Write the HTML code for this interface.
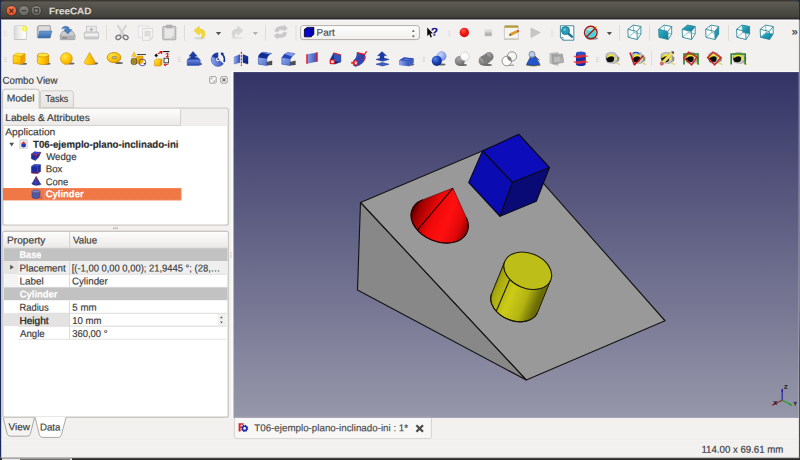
<!DOCTYPE html>
<html><head><meta charset="utf-8"><title>FreeCAD</title>
<style>

html,body{margin:0;padding:0;}
body{width:800px;height:460px;overflow:hidden;background:#f2f1f0;font-family:"Liberation Sans",sans-serif;}
#win{position:absolute;left:0;top:0;width:800px;height:460px;overflow:hidden;}
.a{position:absolute;}
.t{position:absolute;left:0;top:0;white-space:nowrap;transform-origin:0 0;-webkit-text-stroke:0.18px currentColor;}

</style></head>
<body>
<div id="win">

<svg class="a" style="left:0;top:0" width="800" height="460" viewBox="0 0 800 460">
<g id="chrome">
<defs>
<linearGradient id="gtitle" x1="0" y1="0" x2="0" y2="1"><stop offset="0" stop-color="#393834"/><stop offset="0.05" stop-color="#3b3a36"/><stop offset="0.1" stop-color="#5c5a53"/><stop offset="0.17" stop-color="#5a5851"/><stop offset="0.86" stop-color="#43423c"/><stop offset="0.92" stop-color="#302f2c"/><stop offset="1" stop-color="#2c2b28"/></linearGradient>
<linearGradient id="gvp" x1="0" y1="0" x2="0" y2="1"><stop offset="0" stop-color="#333366"/><stop offset="1" stop-color="#9797aa"/></linearGradient>
<linearGradient id="gclose" x1="0" y1="0" x2="0" y2="1"><stop offset="0" stop-color="#f27a50"/><stop offset="1" stop-color="#e3481f"/></linearGradient>
<linearGradient id="gbtn" x1="0" y1="0" x2="0" y2="1"><stop offset="0" stop-color="#86857e"/><stop offset="1" stop-color="#66655f"/></linearGradient>
<linearGradient id="ghdr" x1="0" y1="0" x2="0" y2="1"><stop offset="0" stop-color="#fdfdfc"/><stop offset="1" stop-color="#ebe9e7"/></linearGradient>
<linearGradient id="gtab" x1="0" y1="0" x2="0" y2="1"><stop offset="0" stop-color="#f8f8f7"/><stop offset="1" stop-color="#f2f1f0"/></linearGradient>
<linearGradient id="gtab2" x1="0" y1="0" x2="0" y2="1"><stop offset="0" stop-color="#f0eeec"/><stop offset="1" stop-color="#e8e6e3"/></linearGradient>
</defs>
<rect x="0" y="0" width="800" height="460" fill="#f2f1f0"/>
<rect x="0" y="0" width="800" height="20" fill="#20284c"/>
<path d="M0.9,19.6 L0.9,3.6 Q0.9,0 4.4,0 L795.6,0 Q799,0 799,3.6 L799,19.6 Z" fill="url(#gtitle)"/>
<rect x="1" y="19.5" width="798" height="1.4" fill="#fbfbfa"/>
<circle cx="11.4" cy="10.7" r="5.4" fill="#33322e"/>
<circle cx="11.4" cy="10.7" r="4.8" fill="url(#gclose)"/>
<path d="M9.5,8.8 L13.3,12.6 M13.3,8.8 L9.5,12.6" stroke="#5a2410" stroke-width="1.1"/>
<circle cx="23.9" cy="10.7" r="5.4" fill="#33322e"/>
<circle cx="23.9" cy="10.7" r="4.8" fill="url(#gbtn)"/>
<circle cx="36.3" cy="10.7" r="5.4" fill="#33322e"/>
<circle cx="36.3" cy="10.7" r="4.8" fill="url(#gbtn)"/>
<rect x="21.6" y="10.1" width="4.6" height="1.2" fill="#3e3d39"/>
<rect x="34.2" y="8.6" width="4.2" height="4.2" fill="none" stroke="#3e3d39" stroke-width="1"/>
<rect x="0" y="20" width="1.1" height="440" fill="#1a2a5c"/>
<rect x="1" y="21" width="0.5" height="436.5" fill="#a09e9a" opacity="0.5"/>
<linearGradient id="gredge" x1="0" y1="0" x2="0" y2="1"><stop offset="0" stop-color="#8a8a8c"/><stop offset="0.65" stop-color="#808088"/><stop offset="0.78" stop-color="#54543e"/><stop offset="1" stop-color="#4c4c3a"/></linearGradient>
<rect x="798.9" y="20" width="1.1" height="440" fill="url(#gredge)"/>
<rect x="233.3" y="72" width="565.5" height="345.3" fill="url(#gvp)"/>
<rect x="231.2" y="71.2" width="2.1" height="346.1" fill="#fafaf9"/>
<rect x="231.2" y="71.2" width="567.6" height="0.9" fill="#f9f9f8"/>
</g>
<g id="scene">
<defs>
<linearGradient id="gcone" gradientUnits="userSpaceOnUse" x1="412" y1="209" x2="467" y2="232">
<stop offset="0" stop-color="#4a0000"/><stop offset="0.1" stop-color="#980000"/><stop offset="0.38" stop-color="#f00808"/><stop offset="0.62" stop-color="#ff1010"/><stop offset="0.85" stop-color="#e00808"/><stop offset="1" stop-color="#8a0000"/>
</linearGradient>
<linearGradient id="gcyl" gradientUnits="userSpaceOnUse" x1="491" y1="284" x2="537.5" y2="303">
<stop offset="0" stop-color="#6e6e08"/><stop offset="0.15" stop-color="#a8a810"/><stop offset="0.45" stop-color="#cccc18"/><stop offset="0.75" stop-color="#b4b412"/><stop offset="1" stop-color="#6a6a06"/>
</linearGradient>
</defs>
<polygon points="360.5,202.5 506,141 665,320.75 526.25,380" fill="#999999" stroke="#151515" stroke-width="1.15" stroke-linejoin="round"/>
<polygon points="360.5,202.5 526.25,380 357.5,290" fill="#888888" stroke="#151515" stroke-width="1.15" stroke-linejoin="round"/>
<polygon points="482.50,151.00 518.75,134.25 549.50,167.50 512.50,182.50" fill="#0c0cba" stroke="#0a0a20" stroke-width="1.15" stroke-linejoin="round"/>
<polygon points="482.50,151.00 512.50,182.50 500.00,216.25 468.75,182.50" fill="#0b0bb2" stroke="#0a0a20" stroke-width="1.15" stroke-linejoin="round"/>
<polygon points="512.50,182.50 549.50,167.50 536.25,201.25 500.00,216.25" fill="#0a0a76" stroke="#0a0a20" stroke-width="1.15" stroke-linejoin="round"/>
<path d="M452.90,188.10 L422.32,199.96 A29.75,21.0 22.2 1 0 466.47,217.97 Z" fill="url(#gcone)" stroke="#5a0000" stroke-width="0.6" stroke-linejoin="round"/>
<path d="M422.32,199.96 A29.75,21.0 22.2 1 0 466.47,217.97" fill="none" stroke="#200000" stroke-width="1.15" stroke-linecap="round"/>
<line x1="452.9" y1="188.1" x2="417.8" y2="229.7" stroke="#200000" stroke-width="1.1"/>
<path d="M504.79,261.38 L491.54,293.88 A24.8,17.5 22.2 0 0 537.46,312.62 L550.71,280.12 A24.8,17.5 22.2 0 1 504.79,261.38 Z" fill="url(#gcyl)" stroke="#1a1a00" stroke-width="1.0" stroke-linejoin="round"/>
<path d="M491.54,293.88 A24.8,17.5 22.2 0 0 537.46,312.62" fill="none" stroke="#1a1a00" stroke-width="1.15" stroke-linecap="round"/>
<ellipse cx="527.75" cy="270.75" rx="24.8" ry="17.5" transform="rotate(22.2 527.75 270.75)" fill="#bebe18" stroke="#1a1a00" stroke-width="1.1"/>
<line x1="509.5" y1="280" x2="496.25" y2="311.25" stroke="#1a1a00" stroke-width="1.1"/>
</g>
<g id="toolbar-icons">
<defs>
<linearGradient id="gy" x1="0" y1="0" x2="1" y2="1"><stop offset="0" stop-color="#ffe83c"/><stop offset="0.5" stop-color="#ffc800"/><stop offset="1" stop-color="#f09a00"/></linearGradient>
<linearGradient id="gyv" x1="0" y1="0" x2="0" y2="1"><stop offset="0" stop-color="#ffe030"/><stop offset="1" stop-color="#f4a400"/></linearGradient>
<radialGradient id="gys" cx="0.35" cy="0.3" r="0.8"><stop offset="0" stop-color="#ffe648"/><stop offset="0.6" stop-color="#ffc400"/><stop offset="1" stop-color="#e89800"/></radialGradient>
<linearGradient id="gb" x1="0" y1="0" x2="0" y2="1"><stop offset="0" stop-color="#88a4ec"/><stop offset="1" stop-color="#2848b0"/></linearGradient>
<linearGradient id="gbd" x1="0" y1="0" x2="0" y2="1"><stop offset="0" stop-color="#1c3ca8"/><stop offset="1" stop-color="#0c2478"/></linearGradient>
<linearGradient id="gbh" x1="0" y1="0" x2="1" y2="0"><stop offset="0" stop-color="#8ea6ee"/><stop offset="1" stop-color="#3050b8"/></linearGradient>
<radialGradient id="gbs" cx="0.35" cy="0.3" r="0.8"><stop offset="0" stop-color="#5c84e8"/><stop offset="0.5" stop-color="#1c44b8"/><stop offset="1" stop-color="#0a2070"/></radialGradient>
<radialGradient id="gbl" cx="0.35" cy="0.3" r="0.8"><stop offset="0" stop-color="#c8d8ff"/><stop offset="0.6" stop-color="#90a8ec"/><stop offset="1" stop-color="#6880d0"/></radialGradient>
<radialGradient id="ggs" cx="0.4" cy="0.3" r="0.8"><stop offset="0" stop-color="#a8a8a8"/><stop offset="0.6" stop-color="#808080"/><stop offset="1" stop-color="#585858"/></radialGradient>
<radialGradient id="gws" cx="0.4" cy="0.35" r="0.8"><stop offset="0" stop-color="#ffffff"/><stop offset="0.7" stop-color="#f8f8f8"/><stop offset="1" stop-color="#d8d8d8"/></radialGradient>
<radialGradient id="gred" cx="0.4" cy="0.3" r="0.8"><stop offset="0" stop-color="#ff5a4a"/><stop offset="0.5" stop-color="#ee1414"/><stop offset="1" stop-color="#c80808"/></radialGradient>
<linearGradient id="gt" x1="0" y1="0" x2="1" y2="1"><stop offset="0" stop-color="#34b4d0"/><stop offset="1" stop-color="#0c7890"/></linearGradient>
<linearGradient id="ggr" x1="0" y1="0" x2="0" y2="1"><stop offset="0" stop-color="#e4e4e4"/><stop offset="1" stop-color="#a8a8a8"/></linearGradient>
<linearGradient id="gfold" x1="0" y1="0" x2="0" y2="1"><stop offset="0" stop-color="#6c9cd8"/><stop offset="1" stop-color="#3868a8"/></linearGradient>
<radialGradient id="gstar" cx="0.5" cy="0.5" r="0.5"><stop offset="0" stop-color="#ffffc0"/><stop offset="0.45" stop-color="#f8f020"/><stop offset="1" stop-color="#f8f020" stop-opacity="0"/></radialGradient>
<linearGradient id="gshadow" x1="0" y1="0" x2="1" y2="0"><stop offset="0" stop-color="#404040"/><stop offset="1" stop-color="#404040" stop-opacity="0"/></linearGradient>
</defs>
<rect x="3.9000000000000004" y="30" width="2.6" height="6.600000000000001" fill="#e3e1de" opacity="0.8"/>
<line x1="5.2" y1="30" x2="5.2" y2="36.6" stroke="#f2f1f0" stroke-width="0.7"/>
<rect x="4" y="57" width="2.6" height="0.8" fill="#d2cfcb"/>
<rect x="4" y="59" width="2.6" height="0.8" fill="#d2cfcb"/>
<rect x="4" y="61" width="2.6" height="0.8" fill="#d2cfcb"/>
<rect x="14.3" y="25.8" width="12" height="13.4" rx="0.8" fill="#fafafa" stroke="#c2c2c2" stroke-width="0.8"/>
<rect x="14" y="39" width="12.6" height="1" fill="#bdbdbd" opacity="0.7"/>
<linearGradient id="gpage" x1="0" y1="0" x2="1" y2="0"><stop offset="0" stop-color="#dcdcdc"/><stop offset="0.6" stop-color="#f6f6f6"/><stop offset="1" stop-color="#ffffff"/></linearGradient><rect x="14.8" y="26.3" width="11" height="12.4" fill="url(#gpage)"/>
<circle cx="24.5" cy="28.6" r="3.6" fill="url(#gstar)"/>
<path d="M37.3,37.6 L37.3,27.2 L38.6,25.6 L50,25.6 L50.6,26.6 L50.6,37.6 Z" fill="#bdbdbd" stroke="#8a8a8a" stroke-width="0.6"/>
<rect x="39" y="26.4" width="10.6" height="5" fill="#dcdcdc"/>
<path d="M38,38 L39.8,31 L52,31 L49.8,38 Z" fill="url(#gfold)" stroke="#3c68a4" stroke-width="0.5"/>
<path d="M60.2,35 L62.6,31.2 L72.6,31.2 L75,35 L75,39 Q75,39.6 74.4,39.6 L60.8,39.6 Q60.2,39.6 60.2,39 Z" fill="#cfcfcf" stroke="#8c8c8c" stroke-width="0.7"/>
<rect x="60.6" y="35.4" width="14" height="3.8" fill="#b4b4b4"/>
<rect x="62" y="37.4" width="5" height="0.9" fill="#707070"/>
<path d="M61.6,28.6 Q64.5,24.6 69,27.6 L69.2,29.6 L71.8,29.6 L67.8,34 L63.8,29.8 L66.2,29.8 Q65,27.2 61.6,28.6 Z" fill="#4a80c4" stroke="#2c5c9c" stroke-width="0.5"/>
<rect x="86.6" y="26.2" width="9.6" height="6.4" fill="#ececec" stroke="#bcbcbc" stroke-width="0.7"/>
<path d="M91.4,27.6 L93.4,30 L92,30 L92,31.4 L90.8,31.4 L90.8,30 L89.4,30 Z" fill="#b0b0b0"/>
<rect x="84.2" y="32" width="14.4" height="7" rx="1.2" fill="#dcdcdc" stroke="#b4b4b4" stroke-width="0.7"/>
<rect x="85" y="34" width="13" height="1.6" fill="#f6f6f6"/>
<rect x="85" y="37.2" width="13" height="1.4" fill="#c4c4c4"/>
<rect x="106.0" y="25" width="1" height="15.5" fill="#e0ddd9"/>
<path d="M117.2,25.4 L118.6,25.6 L125.2,36 L123.6,36.4 Z" fill="#e2e2e2" stroke="#b8b8b8" stroke-width="0.5"/>
<path d="M126.6,25.4 L125.2,25.6 L118.8,36 L120.4,36.4 Z" fill="#e2e2e2" stroke="#b8b8b8" stroke-width="0.5"/>
<ellipse cx="118.4" cy="37.4" rx="2.6" ry="2" transform="rotate(-30 118.4 37.4)" fill="none" stroke="#7a7a7a" stroke-width="1.3"/>
<ellipse cx="125.6" cy="37.4" rx="2.6" ry="2" transform="rotate(30 125.6 37.4)" fill="none" stroke="#7a7a7a" stroke-width="1.3"/>
<rect x="138.2" y="25.8" width="10" height="11.6" fill="#f4f4f4" stroke="#dcdcdc" stroke-width="0.8"/>
<path d="M142.4,28.4 L152.6,28.4 L152.6,37.6 L149.8,40.4 L142.4,40.4 Z" fill="#f2f2f2" stroke="#d6d6d6" stroke-width="0.8"/>
<rect x="144.4" y="31" width="6.2" height="5.4" fill="#dcdcdc"/>
<path d="M149.8,40.4 L149.8,37.6 L152.6,37.6 Z" fill="#e6e6e6" stroke="#d0d0d0" stroke-width="0.5"/>
<rect x="162.8" y="26.4" width="13" height="13.4" rx="0.8" fill="#d0d0d0" stroke="#a4a4a4" stroke-width="0.9"/>
<rect x="164.8" y="28.4" width="9" height="9.6" fill="#e8e8e8"/>
<rect x="166.4" y="25" width="5.8" height="2.8" rx="0.8" fill="#b4b4b4" stroke="#9a9a9a" stroke-width="0.5"/>
<path d="M173.8,38 L171,38 L173.8,35.4 Z" fill="#c4c4c4"/>
<rect x="184.0" y="25" width="1" height="15.5" fill="#e0ddd9"/>
<ellipse cx="199.4" cy="38.2" rx="5.6" ry="1.2" fill="#c8c8c8" opacity="0.6"/>
<path d="M194,30.6 L199.2,26.2 L199.2,28.8 Q205.4,29.2 205,34.4 Q204.6,37.6 201,38.4 Q203,35.6 201.6,33.6 Q200.6,32.6 199.2,32.8 L199.2,35.2 Z" fill="#f2d83a" stroke="#e4c420" stroke-width="0.5"/>
<path d="M215.9,32 L221.1,32 L218.5,35.2 Z" fill="#555350"/>
<ellipse cx="236.6" cy="38" rx="5.6" ry="1.2" fill="#dcdcdc" opacity="0.6"/>
<path d="M243,30.6 L237.8,26.2 L237.8,28.8 Q231.6,29.2 232,34.4 Q232.4,37.2 235,37.8 Q233.8,35.4 235.4,33.6 Q236.4,32.6 237.8,32.8 L237.8,35.2 Z" fill="#d6d6d6" stroke="#cccccc" stroke-width="0.5"/>
<path d="M252.8,32 L258.0,32 L255.4,35.2 Z" fill="#b4b2af"/>
<rect x="265.0" y="25" width="1" height="15.5" fill="#e0ddd9"/>
<path d="M275,31.4 Q275.4,26.6 280.6,26.4 L284,26.4 L284,25 L287.4,28.2 L284,31 L284,29.4 L281,29.4 Q278.4,29.6 278.2,31.4 Z" fill="#cacaca" stroke="#b8b8b8" stroke-width="0.4"/>
<path d="M286.6,32.6 Q286.2,37.4 281,37.6 L277.6,37.6 L277.6,39 L274.2,35.8 L277.6,33 L277.6,34.6 L280.6,34.6 Q283.2,34.4 283.4,32.6 Z" fill="#cacaca" stroke="#b8b8b8" stroke-width="0.4"/>
<rect x="295.5" y="25" width="1" height="15.5" fill="#e0ddd9"/>
<linearGradient id="gcombo" x1="0" y1="0" x2="0" y2="1"><stop offset="0" stop-color="#ffffff"/><stop offset="1" stop-color="#f0efed"/></linearGradient>
<rect x="300.6" y="25.6" width="118.8" height="14" rx="2.6" fill="url(#gcombo)" stroke="#a9a6a1" stroke-width="0.9"/>
<path d="M304.4,29.4 L307.2,27.4 L313.8,27.4 L313.8,34.4 L311,36.8 L304.4,36.8 Z" fill="#0404e0" stroke="#080830" stroke-width="0.9" stroke-linejoin="round"/>
<path d="M304.4,29.4 L311,29.4 L313.8,27.4 M311,29.4 L311,36.8" fill="none" stroke="#080830" stroke-width="0.7"/>
<path d="M311,29.4 L313.8,27.4 L313.8,34.4 L311,36.8 Z" fill="#0202a4"/>
<path d="M411.8,31.8 L414.8,31.8 L413.3,29.8 Z" fill="#5a5856"/>
<path d="M411.8,35.6 L414.8,35.6 L413.3,37.6 Z" fill="#5a5856"/>
<path d="M427.2,27.4 L427.2,36 L429.2,34.2 L430.6,37.6 L432,37 L430.6,33.6 L433,33.4 Z" fill="#0c0c0c"/>
<rect x="447.9" y="30" width="2.6" height="6.600000000000001" fill="#e3e1de" opacity="0.8"/>
<line x1="449.2" y1="30" x2="449.2" y2="36.6" stroke="#f2f1f0" stroke-width="0.7"/>
<circle cx="464.3" cy="32.5" r="4.7" fill="url(#gred)"/>
<rect x="484.6" y="29" width="7.4" height="7.2" fill="url(#ggr)" opacity="0.8"/>
<rect x="485.4" y="32.6" width="5.8" height="2.8" fill="#b4b4b4"/>
<rect x="504.4" y="25.8" width="14" height="13.4" rx="1" fill="#f4f4f0" stroke="#c0beb4" stroke-width="0.7"/>
<rect x="504.4" y="25.6" width="14" height="2.2" rx="0.8" fill="#b49c34"/>
<rect x="504" y="38.4" width="14.8" height="1.4" fill="#c8c6bc"/>
<path d="M509.4,35.4 L510,33.6 L516.8,30.4 L518,32.2 L511.2,35.4 Z" fill="#e8a020" stroke="#b87010" stroke-width="0.4"/>
<path d="M516.8,30.4 L518.2,29.8 L519,31.4 L518,32.2 Z" fill="#e02828"/>
<path d="M509.4,35.4 L510,33.6 L511.2,35.4 Z" fill="#4a3a20"/>
<path d="M531,28 L540.2,32.6 L531,37.6 Z" fill="#c6c6c6" stroke="#bababa" stroke-width="0.6" stroke-linejoin="round"/>
<rect x="550.9000000000001" y="30" width="2.6" height="6.600000000000001" fill="#e3e1de" opacity="0.8"/>
<line x1="552.2" y1="30" x2="552.2" y2="36.6" stroke="#f2f1f0" stroke-width="0.7"/>
<path d="M560.4,25.8 L573.8,25.8 L573.8,40.2 L563,40.2 L560.4,37.6 Z" fill="#ffffff" stroke="#2f7f90" stroke-width="0.9"/>
<path d="M560.4,37.6 L563,37.6 L563,40.2" fill="none" stroke="#2f7f90" stroke-width="0.7"/>
<line x1="567.8" y1="33" x2="571.8" y2="36.6" stroke="#1c7c94" stroke-width="2.6" stroke-linecap="round"/>
<circle cx="565.5" cy="30.6" r="4" fill="#2c9cb8" stroke="#16708a" stroke-width="0.9"/>
<circle cx="564.6" cy="29.6" r="1.6" fill="#6cc8dc" opacity="0.8"/>
<ellipse cx="592.4" cy="38.4" rx="5.6" ry="1.4" fill="#505050" opacity="0.55"/>
<path d="M586.4,30.4 L589.2,28.6 L595.4,28.6 L595.4,35.4 L592.6,37.6 L586.4,37.6 Z" fill="#48d8dc" stroke="#28a8b0" stroke-width="0.5"/>
<path d="M586.4,30.4 L592.6,30.4 L595.4,28.6 L589.2,28.6 Z" fill="#a8f0f0"/>
<line x1="592" y1="31.6" x2="596.6" y2="26.6" stroke="#f0d020" stroke-width="1.5"/>
<circle cx="590.8" cy="32.6" r="6.3" fill="none" stroke="#a41414" stroke-width="1.4"/>
<line x1="586.4" y1="37" x2="595.2" y2="28.2" stroke="#b01818" stroke-width="1.4"/>
<path d="M606.8,32 L612.0,32 L609.4,35.2 Z" fill="#555350"/>
<rect x="619.0" y="25" width="1" height="15.5" fill="#e0ddd9"/>
<polygon points="627.9,29.3 633.2,25.1 640.9,26.5 640.9,33.9 637.3,39.5 628.2,37.3" fill="#ffffff" opacity="0.85"/>
<path d="M633.9,32.5 L633.2,25.1 M633.9,32.5 L640.9,33.9 M633.9,32.5 L628.2,37.3" fill="none" stroke="#5aa8b4" stroke-width="0.7"/>
<polygon points="627.9,29.3 633.2,25.1 640.9,26.5 640.9,33.9 637.3,39.5 628.2,37.3" fill="none" stroke="#2e8898" stroke-width="0.9" stroke-linejoin="round"/>
<path d="M627.9,29.3 L637.0,31.4 L640.9,26.5 M637.0,31.4 L637.3,39.5" fill="none" stroke="#2e8898" stroke-width="0.9"/>
<rect x="649.0" y="25" width="1" height="15.5" fill="#e0ddd9"/>
<polygon points="658.7,29.3 664.0,25.1 671.7,26.5 671.7,33.9 668.1,39.5 659.0,37.3" fill="#ffffff" opacity="0.85"/>
<path d="M664.7,32.5 L664.0,25.1 M664.7,32.5 L671.7,33.9 M664.7,32.5 L659.0,37.3" fill="none" stroke="#5aa8b4" stroke-width="0.7"/>
<polygon points="658.7,29.3 667.8,31.4 668.1,39.5 659.0,37.3" fill="url(#gt)"/>
<polygon points="658.7,29.3 664.0,25.1 671.7,26.5 671.7,33.9 668.1,39.5 659.0,37.3" fill="none" stroke="#2e8898" stroke-width="0.9" stroke-linejoin="round"/>
<path d="M658.7,29.3 L667.8,31.4 L671.7,26.5 M667.8,31.4 L668.1,39.5" fill="none" stroke="#2e8898" stroke-width="0.9"/>
<polygon points="682.2,29.3 687.5,25.1 695.2,26.5 695.2,33.9 691.6,39.5 682.5,37.3" fill="#ffffff" opacity="0.85"/>
<path d="M688.2,32.5 L687.5,25.1 M688.2,32.5 L695.2,33.9 M688.2,32.5 L682.5,37.3" fill="none" stroke="#5aa8b4" stroke-width="0.7"/>
<polygon points="682.2,29.3 687.5,25.1 695.2,26.5 691.3,31.4" fill="url(#gt)"/>
<polygon points="682.2,29.3 687.5,25.1 695.2,26.5 695.2,33.9 691.6,39.5 682.5,37.3" fill="none" stroke="#2e8898" stroke-width="0.9" stroke-linejoin="round"/>
<path d="M682.2,29.3 L691.3,31.4 L695.2,26.5 M691.3,31.4 L691.6,39.5" fill="none" stroke="#2e8898" stroke-width="0.9"/>
<polygon points="705.7,29.3 711.0,25.1 718.7,26.5 718.7,33.9 715.1,39.5 706.0,37.3" fill="#ffffff" opacity="0.85"/>
<path d="M711.7,32.5 L711.0,25.1 M711.7,32.5 L718.7,33.9 M711.7,32.5 L706.0,37.3" fill="none" stroke="#5aa8b4" stroke-width="0.7"/>
<polygon points="714.8,31.4 718.7,26.5 718.7,33.9 715.1,39.5" fill="url(#gt)"/>
<polygon points="705.7,29.3 711.0,25.1 718.7,26.5 718.7,33.9 715.1,39.5 706.0,37.3" fill="none" stroke="#2e8898" stroke-width="0.9" stroke-linejoin="round"/>
<path d="M705.7,29.3 L714.8,31.4 L718.7,26.5 M714.8,31.4 L715.1,39.5" fill="none" stroke="#2e8898" stroke-width="0.9"/>
<rect x="728.0" y="25" width="1" height="15.5" fill="#e0ddd9"/>
<polygon points="736.6,29.3 741.9,25.1 749.6,26.5 749.6,33.9 746.0,39.5 736.9,37.3" fill="#ffffff" opacity="0.85"/>
<polygon points="741.9,25.1 749.6,26.5 749.6,33.9 742.6,32.5" fill="url(#gt)"/>
<path d="M742.6,32.5 L741.9,25.1 M742.6,32.5 L749.6,33.9 M742.6,32.5 L736.9,37.3" fill="none" stroke="#5aa8b4" stroke-width="0.7"/>
<polygon points="736.6,29.3 741.9,25.1 749.6,26.5 749.6,33.9 746.0,39.5 736.9,37.3" fill="none" stroke="#2e8898" stroke-width="0.9" stroke-linejoin="round"/>
<path d="M736.6,29.3 L745.7,31.4 L749.6,26.5 M745.7,31.4 L746.0,39.5" fill="none" stroke="#2e8898" stroke-width="0.9"/>
<polygon points="760.2,29.3 765.5,25.1 773.2,26.5 773.2,33.9 769.6,39.5 760.5,37.3" fill="#ffffff" opacity="0.85"/>
<polygon points="760.5,37.3 769.6,39.5 773.2,33.9 766.2,32.5" fill="url(#gt)"/>
<path d="M766.2,32.5 L765.5,25.1 M766.2,32.5 L773.2,33.9 M766.2,32.5 L760.5,37.3" fill="none" stroke="#5aa8b4" stroke-width="0.7"/>
<polygon points="760.2,29.3 765.5,25.1 773.2,26.5 773.2,33.9 769.6,39.5 760.5,37.3" fill="none" stroke="#2e8898" stroke-width="0.9" stroke-linejoin="round"/>
<path d="M760.2,29.3 L769.3,31.4 L773.2,26.5 M769.3,31.4 L769.6,39.5" fill="none" stroke="#2e8898" stroke-width="0.9"/>
<ellipse cx="23.5" cy="63.8" rx="3.5" ry="1.0" fill="#3a3a3a" opacity="0.75"/>
<path d="M13.2,55.6 L16.6,53.2 L25,53.8 L25,61.8 L21,64.4 L13.2,63.4 Z" fill="url(#gy)" stroke="#c48800" stroke-width="0.6" stroke-linejoin="round"/>
<path d="M13.2,55.6 L21,56.4 L25,53.8 L16.6,53.2 Z" fill="#ffe23a"/>
<path d="M21,56.4 L25,53.8 L25,61.8 L21,64.4 Z" fill="#f0a000"/>
<path d="M13.2,55.6 L21,56.4 L25,53.8 M21,56.4 L21,64.4" fill="none" stroke="#c48800" stroke-width="0.5"/>
<ellipse cx="47" cy="63.8" rx="3.5" ry="1.0" fill="#3a3a3a" opacity="0.75"/>
<path d="M37.4,55 L37.4,62.6 A5.6,1.9 0 0 0 48.6,62.6 L48.6,55 Z" fill="url(#gbhy)" />
<linearGradient id="gbhy" x1="0" y1="0" x2="1" y2="0"><stop offset="0" stop-color="#ffdc28"/><stop offset="0.5" stop-color="#ffc400"/><stop offset="1" stop-color="#ee9c00"/></linearGradient>
<path d="M37.4,55 L37.4,62.6 A5.6,1.9 0 0 0 48.6,62.6 L48.6,55" fill="url(#gbhy)" stroke="#c48800" stroke-width="0.6"/>
<ellipse cx="43" cy="55" rx="5.6" ry="1.9" fill="#ffe644" stroke="#c48800" stroke-width="0.6"/>
<ellipse cx="71" cy="63.6" rx="3.5" ry="1.0" fill="#3a3a3a" opacity="0.75"/>
<circle cx="66.4" cy="58.6" r="5.9" fill="url(#gys)" stroke="#d08c00" stroke-width="0.6"/>
<ellipse cx="94.5" cy="63.4" rx="3.5" ry="1.1" fill="#3a3a3a" opacity="0.75"/>
<path d="M89.6,52.4 L84.2,62.6 A5.6,2 0 0 0 95.4,62.6 Z" fill="url(#gbhy)" stroke="#d08c00" stroke-width="0.6" stroke-linejoin="round"/>
<ellipse cx="119" cy="63" rx="4.0" ry="1.1" fill="#3a3a3a" opacity="0.75"/>
<ellipse cx="114" cy="57.6" rx="6.9" ry="5.1" fill="url(#gys)" stroke="#b88000" stroke-width="0.7"/>
<ellipse cx="114.4" cy="57.6" rx="2.6" ry="1.3" fill="#b4b0a4" stroke="#9a7800" stroke-width="0.5"/>
<path d="M134,51.8 L131.8,56.4 L136.2,56.4 Z" fill="#ffd21c" stroke="#c89000" stroke-width="0.4"/>
<rect x="137" y="54" width="9" height="0.9" fill="#303030"/>
<path d="M136,57.4 L138,56 L143,56 L143,62 L141,63.6 L136,63.6 Z" fill="#f4b000" stroke="#b88000" stroke-width="0.4"/>
<ellipse cx="134" cy="61.4" rx="3" ry="3.4" fill="#8c7a28" stroke="#4a4430" stroke-width="0.6"/>
<ellipse cx="134" cy="61.4" rx="1.2" ry="3.4" fill="none" stroke="#d8b020" stroke-width="0.6"/>
<circle cx="142.4" cy="62.4" r="3.4" fill="none" stroke="#383890" stroke-width="0.8"/>
<path d="M143,63 L145.6,63 L145.6,64.6 Z" fill="#303030"/>
<path d="M154.4,55.4 L156.2,53.6 L158,55.4 L156.2,57.2 Z" fill="#101010"/>
<path d="M158,53.8 L161.6,52 M159.6,51.6 L162,51.6 L161.4,54" fill="none" stroke="#e01818" stroke-width="1.1"/>
<rect x="163" y="51" width="6.4" height="1.1" fill="#181818"/>
<path d="M167.4,53 L167.4,57.2 M166,54.4 L167.4,53 L168.8,54.4 M166,56 L167.4,57.4 L168.8,56" fill="none" stroke="#e01818" stroke-width="1"/>
<rect x="164" y="58.2" width="4.6" height="4.6" fill="#f4f4f4" stroke="#383838" stroke-width="0.9"/>
<path d="M164.4,65 L168.4,64 M165.4,63.6 L164.2,65 L166,65.8" fill="none" stroke="#e01818" stroke-width="1"/>
<path d="M154.6,60.4 L156.6,59 L162,59 L162,64.6 L160.2,66 L154.6,66 Z" fill="url(#gy)" stroke="#b88000" stroke-width="0.5"/>
<path d="M160.2,60.4 L162,59 L162,64.6 L160.2,66 Z" fill="#e89800"/>
<rect x="178" y="57" width="2.6" height="0.8" fill="#d2cfcb"/>
<rect x="178" y="59" width="2.6" height="0.8" fill="#d2cfcb"/>
<rect x="178" y="61" width="2.6" height="0.8" fill="#d2cfcb"/>
<ellipse cx="199.6" cy="64" rx="2.5" ry="1.2" fill="#3a3a3a" opacity="0.75"/>
<path d="M187.2,59.8 L190,57.4 L197.6,57.4 L200.2,59.8 L200.2,64.4 L198.8,65.4 L187.2,65.4 Z" fill="url(#gb)" stroke="#3450b0" stroke-width="0.5"/>
<path d="M187.2,59.8 L190,57.4 L197.6,57.4 L200.2,59.8 Z" fill="#2c48b0"/>
<path d="M193,51.4 L197.2,56.2 L195,56.2 L195,58.6 L191,58.6 L191,56.2 L189,56.2 Z" fill="#1c3ca4" stroke="#102880" stroke-width="0.4"/>
<path d="M218,52.8 A6.8,6.8 0 1 0 223.4,63.8 L219.6,60.6 A2.2,2.2 0 1 1 218,57.2 Z" fill="url(#gbh)" stroke="#2844a4" stroke-width="0.5"/>
<path d="M218,52.8 A6.8,6.8 0 0 0 212,56.4 L216.2,58.6 A2.2,2.2 0 0 1 218,57.2 Z" fill="#1c3ca4"/>
<path d="M221.6,53.6 Q225.6,57 224,62" fill="none" stroke="#142c88" stroke-width="1.6"/>
<path d="M220.6,52.4 L224.2,53 L221.6,55.6 Z" fill="#142c88"/>
<circle cx="218.2" cy="59.2" r="0.9" fill="#142c88"/>
<path d="M234.2,57 L240,54.6 L240,62.6 L234.2,64 Z" fill="url(#gbh)" stroke="#4058c0" stroke-width="0.4"/>
<path d="M243,54.6 L248,56.6 L248,64 L243,62.6 Z" fill="url(#gbd)" stroke="#0c2070" stroke-width="0.4"/>
<line x1="241.4" y1="51.8" x2="241.4" y2="66" stroke="#f01818" stroke-width="1.1" stroke-dasharray="2.2 1"/>
<linearGradient id="gbf" x1="0" y1="0" x2="1" y2="1"><stop offset="0" stop-color="#a4b8f6"/><stop offset="1" stop-color="#4060c4"/></linearGradient>
<path d="M265.6,62.2 L272.2,60.4 L272.2,65 L266.4,65.4 Z" fill="#3c3c3c" opacity="0.9"/>
<path d="M258.4,57.4 Q258.6,53.6 263,52.2 L271.6,53.4 Q267.6,54.6 266.8,58.8 L266.8,65.6 L258.4,64.2 Z" fill="url(#gbf)" stroke="#2844a4" stroke-width="0.5"/>
<path d="M258.4,57.4 Q258.6,53.6 263,52.2 L271.6,53.4 Q267.6,54.6 266.8,58.8 Z" fill="#102c94"/>
<path d="M262,52.8 L263.4,52.2 L271.6,53.4 L269.4,54.2 Z" fill="#8098ec"/>
<path d="M289.0,62.2 L295.59999999999997,60.4 L295.59999999999997,65 L289.79999999999995,65.4 Z" fill="#3c3c3c" opacity="0.9"/>
<path d="M281.79999999999995,57.8 L284.59999999999997,54 L287.79999999999995,52.4 L295.0,53.6 L292.0,56.4 L290.2,59 L290.2,65.6 L281.79999999999995,64.2 Z" fill="url(#gbf)" stroke="#2844a4" stroke-width="0.5"/>
<path d="M284.59999999999997,54 L287.79999999999995,52.4 L295.0,53.6 L292.0,56.4 Z" fill="#7c94e8"/>
<path d="M281.79999999999995,57.8 L284.59999999999997,54 L292.0,56.4 L290.2,59 Z" fill="#2448b8"/>
<path d="M307,54.6 L317,52.8 L317,61.4 L307,63.4 Z" fill="url(#gbh)" stroke="#4058c0" stroke-width="0.3"/>
<line x1="307" y1="54.2" x2="307" y2="63.8" stroke="#f01818" stroke-width="1.4"/>
<line x1="317" y1="52.2" x2="317" y2="61.8" stroke="#f01818" stroke-width="1.4"/>
<path d="M330,60 L333.6,53 L340.8,55 L340.8,62 L335,64 L330,63.6 Z" fill="url(#gbd)" stroke="#0c2070" stroke-width="0.4"/>
<path d="M334.4,61 L333.6,53 L340.8,55 L340.8,62 Z" fill="#3454bc"/>
<path d="M333.6,53 L340.8,55" stroke="#f01818" stroke-width="1.2" fill="none"/>
<rect x="330.4" y="60" width="3.8" height="3.6" fill="#e8e0f0" stroke="#f01818" stroke-width="1"/>
<path d="M357,52.6 L364.6,54.6 Q366.8,58 363,62.4 Q359.6,65.8 355.4,66.4 L353.4,65.2 L353.6,60.6 Q357.4,58 357,52.6 Z" fill="url(#gbd2)" stroke="#18308c" stroke-width="0.5"/>
<linearGradient id="gbd2" x1="0" y1="0" x2="1" y2="1"><stop offset="0" stop-color="#4868d0"/><stop offset="0.5" stop-color="#2440b0"/><stop offset="1" stop-color="#3c5cc8"/></linearGradient>
<path d="M357,52.6 L364.6,54.6" stroke="#f01818" stroke-width="1.2"/>
<path d="M364.2,54.8 L366.6,51.4" stroke="#f01818" stroke-width="1.2"/>
<path d="M364.8,56 Q366,59 362.6,62.6" stroke="#f03030" stroke-width="0.8" fill="none"/>
<path d="M361,57 Q360,61 356.6,63" stroke="#e03040" stroke-width="0.5" fill="none" opacity="0.8"/>
<path d="M351.2,62.8 L354.4,62.8" stroke="#f01818" stroke-width="1.8"/>
<rect x="354.2" y="61" width="3" height="3.8" fill="#f4ecf4" stroke="#f01818" stroke-width="1"/>
<path d="M382,51.6 L386.6,55.8 L384,55.8 L384,58.4 L380,58.4 L380,55.8 L377.4,55.8 Z" fill="#1c3ca4" stroke="#102880" stroke-width="0.3"/>
<path d="M376,59.4 L382.4,57.6 L389,59.4 L382.6,61.2 Z" fill="#2448b0" stroke="#142c88" stroke-width="0.5"/>
<path d="M380,57.8 L384,57.8 L384,59.6 L380,59.6 Z" fill="#1c3ca4"/>
<path d="M376,64.2 L382.4,62.4 L389,64.2 L382.6,66 Z" fill="#3c60c8" stroke="#142c88" stroke-width="0.5"/>
<ellipse cx="411.4" cy="64.6" rx="3.0" ry="1.1" fill="#3a3a3a" opacity="0.75"/>
<path d="M399.6,60.2 L404,57.6 L413.4,58.6 L413.4,63 L409.4,66 L399.6,64.8 Z" fill="#7890e0" stroke="#3450b4" stroke-width="0.5"/>
<path d="M399.6,60.2 L409.4,61.4 L409.4,66 L399.6,64.8 Z" fill="url(#gbh)"/>
<path d="M409.4,61.4 L413.4,58.6 L413.4,63 L409.4,66 Z" fill="#4060c0"/>
<path d="M399.6,60.2 L404,57.6 L413.4,58.6 L409.4,61.4 Z" fill="#2c48b0"/>
<path d="M402.6,60 L405,58.6 L410.6,59.2 L408.4,60.6 Z" fill="#5478d8"/>
<rect x="422.4" y="57" width="2.6" height="0.8" fill="#d2cfcb"/>
<rect x="422.4" y="59" width="2.6" height="0.8" fill="#d2cfcb"/>
<rect x="422.4" y="61" width="2.6" height="0.8" fill="#d2cfcb"/>
<ellipse cx="442" cy="64.6" rx="3.5" ry="1.0" fill="#3a3a3a" opacity="0.75"/>
<circle cx="441.6" cy="56.2" r="4.6" fill="url(#gbl)" stroke="#7088d0" stroke-width="0.4"/>
<circle cx="436.8" cy="60.8" r="5.1" fill="url(#gbs)"/>
<ellipse cx="463" cy="65" rx="4.0" ry="0.9" fill="#3a3a3a" opacity="0.75"/>
<circle cx="459.8" cy="61" r="5" fill="url(#ggs)"/>
<circle cx="464.8" cy="56.4" r="4.4" fill="url(#gws)" stroke="#a8a8a8" stroke-width="0.4"/>
<ellipse cx="488" cy="65" rx="4.0" ry="0.9" fill="#3a3a3a" opacity="0.75"/>
<circle cx="483.6" cy="60.8" r="5" fill="url(#ggs)"/>
<circle cx="489" cy="56.6" r="4.5" fill="url(#ggs)"/>
<path d="M480.6,57 L486,53.6 L492,60 L487,64.6 Z" fill="#7c7c7c"/>
<path d="M508,65.2 L514,65.2" stroke="#707070" stroke-width="0.8"/>
<circle cx="506.8" cy="61" r="4.8" fill="#fcfcfc" stroke="#686868" stroke-width="0.7"/>
<circle cx="512" cy="56.4" r="4.6" fill="#fcfcfc" fill-opacity="0.6" stroke="#686868" stroke-width="0.7"/>
<path d="M507.6,56.6 Q511.6,56 511.4,60.6 Q507.6,61.2 507.6,56.6 Z" fill="#787878"/>
<ellipse cx="533.4" cy="65.2" rx="7.4" ry="1.2" fill="#a89c48"/>
<path d="M530.6,56.4 L526.4,64.6 Q533,66.6 540,64.6 L535.6,56.4 Z" fill="#2454c8" stroke="#142c78" stroke-width="0.5"/>
<line x1="534.4" y1="56.4" x2="539.6" y2="60.2" stroke="#404048" stroke-width="0.9"/>
<circle cx="532" cy="54.4" r="3" fill="#a8c4f0" fill-opacity="0.8" stroke="#8c8c8c" stroke-width="1"/>
<path d="M549.6,53 L558.4,52 L558.4,66 L549.6,63.6 Z" fill="#b4b4b4" opacity="0.85"/>
<path d="M552,54.6 L562.6,54 L563.4,62.6 L553,64 Z" fill="#a0a0a0" stroke="#8c8c8c" stroke-width="0.5" opacity="0.9"/>
<path d="M554,57 L560,56.6 L560,62 L554,62.4 Z" fill="#bcbcbc"/>
<rect x="560" y="58.4" width="4" height="4" fill="#b0b0b0"/>
<path d="M576,53.4 L576,64.2 A4.8,1.8 0 0 0 585.6,64.2 L585.6,53.4 Z" fill="#1430a4"/>
<ellipse cx="580.8" cy="53.4" rx="4.8" ry="1.8" fill="#2c50c8"/>
<path d="M573,56 L584.6,54.4 L588.4,56.6 L577,58.6 Z" fill="#ff2828" opacity="0.8"/>
<path d="M573,61.6 L584.6,60 L588.4,62.2 L577,64.2 Z" fill="#ff2828" opacity="0.8"/>
<path d="M576,58.6 L576,61.4 L585.6,60 L585.6,57.2 Z" fill="#1430a4"/>
<rect x="596" y="57" width="2.6" height="0.8" fill="#d2cfcb"/>
<rect x="596" y="59" width="2.6" height="0.8" fill="#d2cfcb"/>
<rect x="596" y="61" width="2.6" height="0.8" fill="#d2cfcb"/>
<path d="M614,61.6 L620,64.6" stroke="#dcd478" stroke-width="1.5"/>
<path d="M615,54 L619.4,57.6 L619,61 L615.4,62.4 Z" fill="#606060" opacity="0.75"/>
<path d="M606.4,53.8 Q610,51.2 614.8,52.8 L617.4,56 L617.4,60.6 L614.6,63.6 L607.4,62.6 Q604.8,58 606.4,53.8 Z" fill="#c4c4c4" stroke="#8c8c8c" stroke-width="0.5"/>
<ellipse cx="610.2" cy="58.8" rx="3.9" ry="3.5" fill="#0c0c0c"/>
<path d="M606.6,57 Q609.4,52.6 614,55 L613.8,56.8 Q610,55.4 607,58.2 Z" fill="#f4ec20"/>
<rect x="614.8" y="57" width="1.8" height="3" fill="#e8e040" transform="rotate(15 615.6 58.5)"/>
<path d="M640,61.6 L646,64.6" stroke="#dcd478" stroke-width="1.5"/>
<path d="M641,54 L645.4,57.6 L645,61 L641.4,62.4 Z" fill="#606060" opacity="0.75"/>
<path d="M632.4,53.8 Q636,51.2 640.8,52.8 L643.4,56 L643.4,60.6 L640.6,63.6 L633.4,62.6 Q630.8,58 632.4,53.8 Z" fill="#c4c4c4" stroke="#8c8c8c" stroke-width="0.5"/>
<ellipse cx="636.2" cy="58.8" rx="3.9" ry="3.5" fill="#0c0c0c"/>
<path d="M632.6,57 Q635.4,52.6 640,55 L639.8,56.8 Q636,55.4 633,58.2 Z" fill="#f4ec20"/>
<rect x="640.8" y="57" width="1.8" height="3" fill="#e8e040" transform="rotate(15 641.6 58.5)"/>
<path d="M630.2,52.6 L634.6,64.8 L643.6,55.6" fill="none" stroke="#d82020" stroke-width="1.5" stroke-linejoin="round"/>
<path d="M630.2,52.6 L634.6,64.8 L643.6,55.6" fill="none" stroke="#381010" stroke-width="0.4" transform="translate(-0.7,0.3)"/>
<path d="M632.6,53.4 Q636.6,51 639.4,54.4" fill="none" stroke="#2050c0" stroke-width="1.2"/>
<rect x="651.0" y="51" width="1" height="15" fill="#e0ddd9"/>
<path d="M669,61.6 L675,64.6" stroke="#dcd478" stroke-width="1.5"/>
<path d="M670,54 L674.4,57.6 L674,61 L670.4,62.4 Z" fill="#606060" opacity="0.75"/>
<path d="M661.4,53.8 Q665,51.2 669.8,52.8 L672.4,56 L672.4,60.6 L669.6,63.6 L662.4,62.6 Q659.8,58 661.4,53.8 Z" fill="#c4c4c4" stroke="#8c8c8c" stroke-width="0.5"/>
<ellipse cx="665.2" cy="58.8" rx="3.9" ry="3.5" fill="#0c0c0c"/>
<path d="M661.6,57 Q664.4,52.6 669,55 L668.8,56.8 Q665,55.4 662,58.2 Z" fill="#f4ec20"/>
<rect x="669.8" y="57" width="1.8" height="3" fill="#e8e040" transform="rotate(15 670.6 58.5)"/>
<path d="M661.6,63.6 L672.4,52.8" stroke="#e8d868" stroke-width="3"/>
<path d="M661.6,63.6 L672.4,52.8" stroke="#a08c30" stroke-width="3.6" opacity="0.35"/>
<path d="M661.6,63.6 L672,53.2" stroke="#f0e070" stroke-width="2.2"/>
<path d="M671.2,51.6 L674,51.4 L673.6,54.2 Z" fill="#2a2a2a"/>
<circle cx="661.8" cy="63.6" r="1.7" fill="#e07070" stroke="#a03030" stroke-width="0.4"/>
<path d="M693.5,61.6 L699.5,64.6" stroke="#dcd478" stroke-width="1.5"/>
<path d="M694.5,54 L698.9,57.6 L698.5,61 L694.9,62.4 Z" fill="#606060" opacity="0.75"/>
<path d="M685.9,53.8 Q689.5,51.2 694.3,52.8 L696.9,56 L696.9,60.6 L694.1,63.6 L686.9,62.6 Q684.3,58 685.9,53.8 Z" fill="#c4c4c4" stroke="#8c8c8c" stroke-width="0.5"/>
<ellipse cx="689.7" cy="58.8" rx="3.9" ry="3.5" fill="#0c0c0c"/>
<path d="M686.1,57 Q688.9,52.6 693.5,55 L693.3,56.8 Q689.5,55.4 686.5,58.2 Z" fill="#f4ec20"/>
<rect x="694.3" y="57" width="1.8" height="3" fill="#e8e040" transform="rotate(15 695.1 58.5)"/>
<path d="M684,64.4 L684,54 L698,54 L698,64.4" fill="none" stroke="#2c8420" stroke-width="1.6"/>
<path d="M683.8,58 L688.6,52.2 L697,57 L691.6,64.8 Z" fill="none" stroke="#c83030" stroke-width="1.5"/>
<path d="M716.5,61.6 L722.5,64.6" stroke="#dcd478" stroke-width="1.5"/>
<path d="M717.5,54 L721.9,57.6 L721.5,61 L717.9,62.4 Z" fill="#606060" opacity="0.75"/>
<path d="M708.9,53.8 Q712.5,51.2 717.3,52.8 L719.9,56 L719.9,60.6 L717.1,63.6 L709.9,62.6 Q707.3,58 708.9,53.8 Z" fill="#c4c4c4" stroke="#8c8c8c" stroke-width="0.5"/>
<ellipse cx="712.7" cy="58.8" rx="3.9" ry="3.5" fill="#0c0c0c"/>
<path d="M709.1,57 Q711.9,52.6 716.5,55 L716.3,56.8 Q712.5,55.4 709.5,58.2 Z" fill="#f4ec20"/>
<rect x="717.3" y="57" width="1.8" height="3" fill="#e8e040" transform="rotate(15 718.1 58.5)"/>
<path d="M707.6,57.6 L713,52.2 L721,57.6 L714.6,64.8 Z" fill="none" stroke="#c83030" stroke-width="1.5"/>
<path d="M741,61.6 L747,64.6" stroke="#dcd478" stroke-width="1.5"/>
<path d="M742,54 L746.4,57.6 L746,61 L742.4,62.4 Z" fill="#606060" opacity="0.75"/>
<path d="M733.4,53.8 Q737,51.2 741.8,52.8 L744.4,56 L744.4,60.6 L741.6,63.6 L734.4,62.6 Q731.8,58 733.4,53.8 Z" fill="#c4c4c4" stroke="#8c8c8c" stroke-width="0.5"/>
<ellipse cx="737.2" cy="58.8" rx="3.9" ry="3.5" fill="#0c0c0c"/>
<path d="M733.6,57 Q736.4,52.6 741,55 L740.8,56.8 Q737,55.4 734,58.2 Z" fill="#f4ec20"/>
<rect x="741.8" y="57" width="1.8" height="3" fill="#e8e040" transform="rotate(15 742.6 58.5)"/>
<path d="M731.2,64.4 L731.2,54 L745.2,54 L745.2,64.4" fill="none" stroke="#2c8420" stroke-width="1.6"/>
</g>
<g id="panels">
<rect x="208.9" y="75.9" width="8" height="8" rx="2" fill="#fbfbfa"/>
<rect x="209.5" y="76.5" width="6.8" height="6.8" rx="1.4" fill="#e9e8e7" stroke="#9a9996" stroke-width="0.8"/>
<rect x="220.0" y="75.9" width="8" height="8" rx="2" fill="#fbfbfa"/>
<rect x="220.6" y="76.5" width="6.8" height="6.8" rx="1.4" fill="#e9e8e7" stroke="#9a9996" stroke-width="0.8"/>
<path d="M211,81.8 L214.8,78" stroke="#fdfdfd" stroke-width="1.3"/>
<path d="M211.2,79.6 L211.2,78.2 L212.6,78.2 M213.2,81.6 L214.6,81.6 L214.6,80.2" fill="none" stroke="#9a9998" stroke-width="0.7"/>
<path d="M222.3,78.2 L225.7,81.6 M225.7,78.2 L222.3,81.6" stroke="#484745" stroke-width="0.95"/>
<path d="M40.4,107.6 L40.4,93.2 Q40.4,90.8 42.8,90.8 L71,90.8 Q73.4,90.8 73.4,93.2 L73.4,107.6 Z" fill="url(#gtab2)" stroke="#c6c3be" stroke-width="0.8"/>
<rect x="2.85" y="108.1" width="225.4" height="117" rx="2.2" fill="#ffffff" stroke="#cbc8c3" stroke-width="1.4"/>
<path d="M2.6,109 L2.6,91.6 Q2.6,89.2 5,89.2 L36.8,89.2 Q39.2,89.2 39.2,91.6 L39.2,108.8" fill="url(#gtab)" stroke="#c2bfba" stroke-width="1"/>
<rect x="3.2" y="107" width="35.4" height="2" fill="#f2f1f0"/>
<rect x="3.5" y="108.8" width="224" height="16.6" fill="#f0efed"/>
<rect x="3.5" y="109.2" width="177" height="16" fill="url(#ghdr)"/>
<rect x="180.2" y="109.2" width="0.9" height="16.2" fill="#cfccc8"/>
<rect x="3.5" y="125" width="177.6" height="0.9" fill="#d2cfcb"/>
<rect x="181" y="125.2" width="46.6" height="0.6" fill="#e6e4e1"/>
<rect x="3" y="188" width="178.4" height="12.4" fill="#f07746"/>
<rect x="44.6" y="188.4" width="136.4" height="11.6" fill="none" stroke="#f8b090" stroke-width="0.6" stroke-dasharray="1 1"/>
<path d="M9.3,142.8 L14.1,142.8 L11.7,146.4 Z" fill="#55534f"/>
<rect x="19.6" y="139.6" width="7.8" height="9" rx="0.6" fill="#e4e4e4" stroke="#c8c8c8" stroke-width="0.5"/>
<path d="M21.4,143.4 L23.6,141.6 L25.8,143.4 L23.6,144 Z" fill="#e02020"/>
<path d="M21.4,143.4 L23.6,144 L25.8,143.4 L25.8,146.4 L23.6,147.6 L21.4,146.4 Z" fill="#2438b0"/>
<path d="M31.4,154 L34.6,151.8 L41,152.4 L38.4,157.6 L35.4,160.4 L31.4,158.8 Z" fill="#1c2ca0" stroke="#101860" stroke-width="0.4"/>
<path d="M31.4,154 L36.4,155 L41,152.4 L34.6,151.8 Z" fill="#3448c8"/>
<path d="M31.4,154 L36.4,155 L41,152.4 M36.4,155 L35.4,160.4" fill="none" stroke="#e02828" stroke-width="0.7"/>
<path d="M31.4,166.4 L34.2,164.6 L40.6,164.8 L40.6,171.4 L37.6,173.4 L31.4,173 Z" fill="#1c2ca0" stroke="#101860" stroke-width="0.4"/>
<path d="M31.4,166.4 L37.6,166.8 L40.6,164.8 L34.2,164.6 Z" fill="#3448c8"/>
<path d="M37.6,166.8 L37.6,173.4 M31.6,173 L37.6,173.4 L40.6,171.4" fill="none" stroke="#e02828" stroke-width="0.7"/>
<ellipse cx="37.4" cy="184.6" rx="4.2" ry="1" fill="#505050" opacity="0.6"/>
<path d="M36.2,176.4 L31.8,184 Q36.2,186.4 40.6,184 Z" fill="#2438b0" stroke="#101860" stroke-width="0.4"/>
<path d="M36.2,176.4 L35.6,185.2" stroke="#e02828" stroke-width="0.7"/>
<path d="M32,191.4 L32,197 A4,1.5 0 0 0 40,197 L40,191.4 Z" fill="#5058a0" stroke="#383c78" stroke-width="0.5"/>
<ellipse cx="36" cy="191.4" rx="4" ry="1.5" fill="#7880c0" stroke="#383c78" stroke-width="0.5"/>
<rect x="40.6" y="197.4" width="1" height="1" fill="#5a3020"/>
<rect x="113" y="227.6" width="5" height="1.2" fill="#c8c5c0"/>
<line x1="113.5" y1="227.4" x2="113.5" y2="229.2" stroke="#a8a5a0" stroke-width="0.5"/><line x1="115.5" y1="227.4" x2="115.5" y2="229.2" stroke="#a8a5a0" stroke-width="0.5"/><line x1="117.5" y1="227.4" x2="117.5" y2="229.2" stroke="#a8a5a0" stroke-width="0.5"/>
<line x1="231" y1="252" x2="231" y2="258" stroke="#c0bdb8" stroke-width="1.2" stroke-dasharray="0.8 1"/>
<rect x="2.85" y="231.3" width="225.4" height="186" rx="2.2" fill="#ffffff" stroke="#cbc8c3" stroke-width="1.4"/>
<rect x="3.5" y="232" width="224" height="15.8" fill="url(#ghdr)"/>
<rect x="3.5" y="247.6" width="224" height="0.9" fill="#d2cfcb"/>
<rect x="69.2" y="232" width="0.9" height="15.6" fill="#cfccc8"/>
<rect x="4" y="248.20" width="223.5" height="13.00" fill="#c2c2c2"/>
<rect x="4" y="287.20" width="223.5" height="13.00" fill="#c2c2c2"/>
<rect x="4" y="261.20" width="223.5" height="13.00" fill="#efefef"/>
<rect x="4" y="261.20" width="14.4" height="13.00" fill="#e6e5e4"/>
<rect x="4" y="274.20" width="14.4" height="13.00" fill="#f4f4f3"/>
<rect x="4" y="313.20" width="65.4" height="13.00" fill="#e4e3e2"/>
<rect x="70" y="313.20" width="156.6" height="13.00" fill="#f2f1f0"/>
<rect x="70.4" y="314.10" width="147.4" height="11.20" fill="#ffffff"/>
<rect x="18.4" y="273.80" width="208.2" height="0.8" fill="#d9d9d9"/>
<rect x="18.4" y="286.80" width="208.2" height="0.8" fill="#d9d9d9"/>
<rect x="18.4" y="312.80" width="208.2" height="0.8" fill="#d9d9d9"/>
<rect x="18.4" y="325.80" width="208.2" height="0.8" fill="#d9d9d9"/>
<rect x="18.4" y="338.80" width="208.2" height="0.8" fill="#d9d9d9"/>
<rect x="69.2" y="261.20" width="0.8" height="13.00" fill="#d4d4d4"/>
<rect x="69.2" y="274.20" width="0.8" height="13.00" fill="#d4d4d4"/>
<rect x="69.2" y="300.20" width="0.8" height="13.00" fill="#d4d4d4"/>
<rect x="69.2" y="313.20" width="0.8" height="13.00" fill="#d4d4d4"/>
<rect x="69.2" y="326.20" width="0.8" height="13.00" fill="#d4d4d4"/>
<path d="M10.2,264.80 L10.2,269.60 L13.8,267.20 Z" fill="#55534f"/>
<path d="M220,318.20 L222.8,318.20 L221.4,316.20 Z" fill="#5a5856"/>
<path d="M220,321.40 L222.8,321.40 L221.4,323.40 Z" fill="#5a5856"/>
<path d="M3.2,418 L7.2,433.8 Q8,436.2 10.2,436.2 L27.4,436.2 Q29.6,436.2 30.4,433.8 L34.4,418" fill="#f5f4f3" stroke="#8a8884" stroke-width="0.7"/>
<path d="M35.2,417.6 L39.4,434.8 Q40.2,437.4 42.4,437.4 L58.4,437.4 Q60.6,437.4 61.4,434.8 L66,417.6" fill="#ffffff" stroke="#8a8884" stroke-width="0.7"/>
<rect x="35.8" y="416.8" width="29.6" height="1.2" fill="#ffffff"/>
<path d="M234.4,417.3 L234.4,436.2 Q234.4,438.6 236.8,438.6 L429,438.6 Q431.4,438.6 431.4,436.2 L431.4,417.3 Z" fill="#f8f7f6" stroke="#cdcac5" stroke-width="0.8"/>
<rect x="233.6" y="416.9" width="565.2" height="0.9" fill="#9a9ab0"/>
<path d="M238.6,423.2 L243.6,423.2 L243.6,424.8 L240.6,424.8 L240.6,426.4 L242.6,426.4 L242.6,427.8 L240.6,427.8 L240.6,431.6 L238.6,431.6 Z" fill="#e02020"/>
<circle cx="244.6" cy="428.4" r="2.9" fill="none" stroke="#1c2cb0" stroke-width="1.4" stroke-dasharray="1.3 0.98"/>
<circle cx="244.6" cy="428.4" r="2.1" fill="none" stroke="#1c2cb0" stroke-width="1.5"/>
<path d="M416.4,425.2 L423,431.8 M423,425.2 L416.4,431.8" stroke="#4c4b48" stroke-width="2.2"/>
<rect x="1.6" y="438.9" width="797" height="0.7" fill="#e2e0dd"/>
<rect x="1.6" y="439.6" width="797" height="0.7" fill="#fbfbfa"/>
<rect x="0" y="457.5" width="800" height="0.8" fill="#8a8884"/>
<rect x="0" y="458.2" width="800" height="1.8" fill="#2a2826"/>
<rect x="2" y="458.4" width="70" height="1.6" fill="#e8e8e8"/>
<rect x="20" y="458.8" width="50" height="1.2" fill="#505050" opacity="0.8"/>
<line x1="782.2" y1="400.2" x2="782.2" y2="389" stroke="#1c1ca0" stroke-width="1.1"/>
<path d="M781.2,391.4 L782.2,388.4 L783.2,391.4 Z" fill="#1c1ca0"/>
<line x1="782.2" y1="400.2" x2="772" y2="405.3" stroke="#a01c1c" stroke-width="1.1"/>
<line x1="782.2" y1="400.2" x2="792" y2="405.3" stroke="#1ca01c" stroke-width="1.1"/>
<path d="M790,403.2 L792.6,405.6 L789.2,405.2 Z" fill="#1ca01c"/>
</g>
</svg>

<span class="t" style="font-size:9.6px;line-height:9.6px;font-weight:700;color:#dfdbd2;transform:translate(49.03px,6.20px) rotate(0.03deg) scaleX(1.0300);text-shadow:0 -0.6px 0.3px #2a2926;">FreeCAD</span>
<span class="t" style="font-size:9.8px;line-height:9.8px;font-weight:400;color:#4c4c4c;transform:translate(316.59px,27.75px) rotate(0.03deg) scaleX(1.0174);">Part</span>
<span class="t" style="font-size:10px;line-height:10px;font-weight:400;color:#3c3c3c;transform:translate(2.51px,75.70px) rotate(0.03deg) scaleX(0.9732);">Combo View</span>
<span class="t" style="font-size:10px;line-height:10px;font-weight:400;color:#3c3c3c;transform:translate(6.63px,93.50px) rotate(0.03deg) scaleX(1.0252);">Model</span>
<span class="t" style="font-size:10px;line-height:10px;font-weight:400;color:#3c3c3c;transform:translate(45.58px,93.50px) rotate(0.03deg) scaleX(0.8880);">Tasks</span>
<span class="t" style="font-size:10px;line-height:10px;font-weight:400;color:#3c3c3c;transform:translate(5.24px,112.90px) rotate(0.03deg) scaleX(1.0140);">Labels &amp; Attributes</span>
<span class="t" style="font-size:10px;line-height:10px;font-weight:400;color:#3c3c3c;transform:translate(5.25px,127.25px) rotate(0.03deg) scaleX(1.0228);">Application</span>
<span class="t" style="font-size:10px;line-height:10px;font-weight:700;color:#2c2c2c;transform:translate(33.10px,139.75px) rotate(0.03deg) scaleX(0.9660);">T06-ejemplo-plano-inclinado-ini</span>
<span class="t" style="font-size:10px;line-height:10px;font-weight:400;color:#3c3c3c;transform:translate(46.20px,152.00px) rotate(0.03deg) scaleX(0.9645);">Wedge</span>
<span class="t" style="font-size:10px;line-height:10px;font-weight:400;color:#3c3c3c;transform:translate(45.67px,164.30px) rotate(0.03deg) scaleX(0.9723);">Box</span>
<span class="t" style="font-size:10px;line-height:10px;font-weight:400;color:#3c3c3c;transform:translate(45.73px,177.20px) rotate(0.03deg) scaleX(0.9435);">Cone</span>
<span class="t" style="font-size:10px;line-height:10px;font-weight:700;color:#ffffff;transform:translate(45.73px,189.20px) rotate(0.03deg) scaleX(0.9468);">Cylinder</span>
<span class="t" style="font-size:10px;line-height:10px;font-weight:400;color:#3c3c3c;transform:translate(7.04px,235.50px) rotate(0.03deg) scaleX(1.0162);">Property</span>
<span class="t" style="font-size:10px;line-height:10px;font-weight:400;color:#3c3c3c;transform:translate(73.10px,235.50px) rotate(0.03deg) scaleX(0.9673);">Value</span>
<span class="t" style="font-size:10px;line-height:10px;font-weight:700;color:#ffffff;transform:translate(19.51px,250.40px) rotate(0.03deg) scaleX(0.9143);">Base</span>
<span class="t" style="font-size:10px;line-height:10px;font-weight:400;color:#3c3c3c;transform:translate(19.47px,263.40px) rotate(0.03deg) scaleX(0.9763);">Placement</span>
<span class="t" style="font-size:10px;line-height:10px;font-weight:400;color:#3c3c3c;transform:translate(71.70px,263.40px) rotate(0.03deg) scaleX(0.9397);">[(-1,00 0,00 0,00); 21,9445 °; (28,…</span>
<span class="t" style="font-size:10px;line-height:10px;font-weight:400;color:#3c3c3c;transform:translate(19.46px,276.60px) rotate(0.03deg) scaleX(0.9870);">Label</span>
<span class="t" style="font-size:10px;line-height:10px;font-weight:400;color:#3c3c3c;transform:translate(71.91px,276.60px) rotate(0.03deg) scaleX(0.9778);">Cylinder</span>
<span class="t" style="font-size:10px;line-height:10px;font-weight:700;color:#ffffff;transform:translate(19.73px,289.50px) rotate(0.03deg) scaleX(0.9418);">Cylinder</span>
<span class="t" style="font-size:10px;line-height:10px;font-weight:400;color:#3c3c3c;transform:translate(19.50px,302.70px) rotate(0.03deg) scaleX(0.9367);">Radius</span>
<span class="t" style="font-size:10px;line-height:10px;font-weight:400;color:#3c3c3c;transform:translate(72.32px,302.70px) rotate(0.03deg) scaleX(0.9667);">5 mm</span>
<span class="t" style="font-size:10px;line-height:10px;font-weight:400;color:#262626;transform:translate(19.44px,316.10px) rotate(0.03deg) scaleX(1.0107);-webkit-text-stroke:0.3px #262626;">Height</span>
<span class="t" style="font-size:10px;line-height:10px;font-weight:400;color:#3c3c3c;transform:translate(72.28px,316.10px) rotate(0.03deg) scaleX(0.9573);">10 mm</span>
<span class="t" style="font-size:10px;line-height:10px;font-weight:400;color:#3c3c3c;transform:translate(20.00px,329.00px) rotate(0.03deg) scaleX(0.9663);">Angle</span>
<span class="t" style="font-size:10px;line-height:10px;font-weight:400;color:#3c3c3c;transform:translate(72.13px,329.00px) rotate(0.03deg) scaleX(0.9490);">360,00 °</span>
<span class="t" style="font-size:10px;line-height:10px;font-weight:400;color:#3c3c3c;transform:translate(8.50px,422.20px) rotate(0.03deg) scaleX(0.9907);">View</span>
<span class="t" style="font-size:10px;line-height:10px;font-weight:400;color:#3c3c3c;transform:translate(40.08px,422.50px) rotate(0.03deg) scaleX(0.9610);">Data</span>
<span class="t" style="font-size:10px;line-height:10px;font-weight:400;color:#4c4c4c;transform:translate(254.26px,423.25px) rotate(0.03deg) scaleX(0.9780);">T06-ejemplo-plano-inclinado-ini : 1*</span>
<span class="t" style="font-size:10px;line-height:10px;font-weight:400;color:#3c3c3c;transform:translate(701.48px,444.70px) rotate(0.03deg) scaleX(0.9641);">114.00 x 69.61 mm</span>
<span class="t" style="font-size:11px;line-height:11px;font-weight:400;color:#2c2c2c;transform:translate(791.70px,26.30px) rotate(0.03deg) scaleX(0.9905);">»</span>
<span class="t" style="font-size:11.5px;line-height:11.5px;font-weight:700;color:#16168c;transform:translate(431.10px,26.70px) rotate(0.03deg) scaleX(1.0000);">?</span>
<span class="t" style="font-size:5.5px;line-height:5.5px;font-weight:700;color:#181818;transform:translate(783.93px,384.72px) rotate(0.03deg) scaleX(1.0667);">Z</span>
<span class="t" style="font-size:5.5px;line-height:5.5px;font-weight:700;color:#181818;transform:translate(773.34px,400.72px) rotate(0.03deg) scaleX(1.0462);">X</span>
<span class="t" style="font-size:5.5px;line-height:5.5px;font-weight:700;color:#181818;transform:translate(793.14px,401.52px) rotate(0.03deg) scaleX(1.0462);">Y</span>
</div>
</body></html>
